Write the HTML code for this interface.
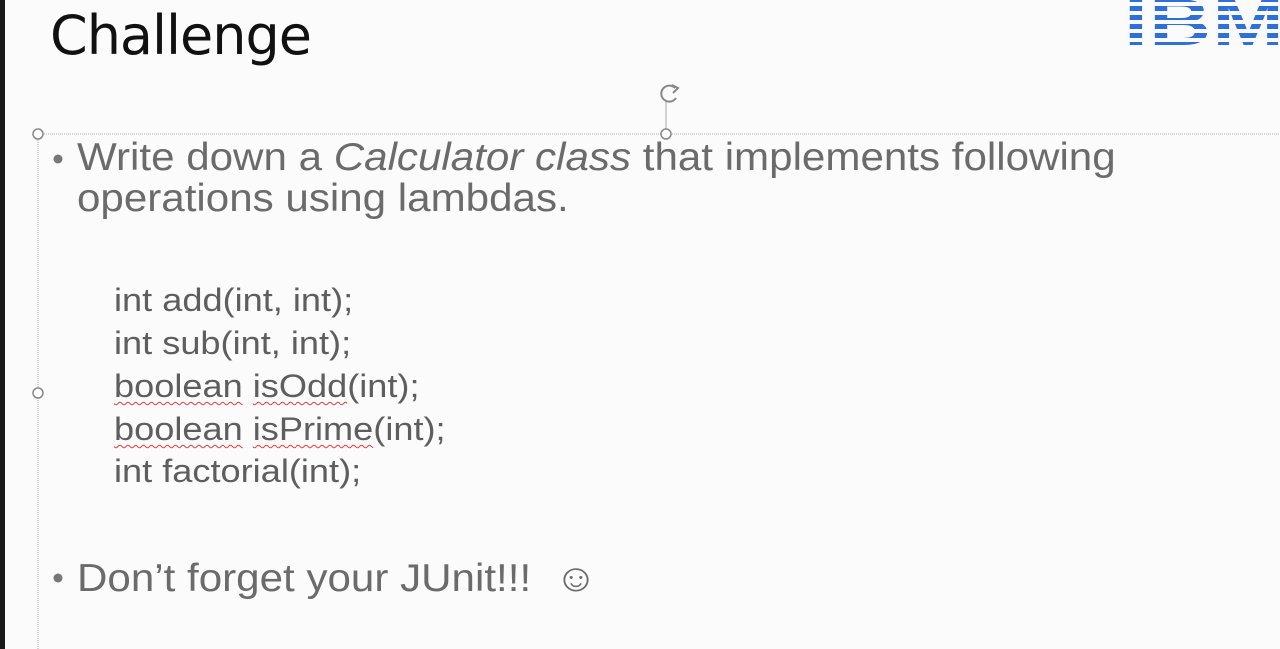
<!DOCTYPE html>
<html><head><style>
body{margin:0;width:1280px;height:649px;overflow:hidden;background:#fbfbfb;position:relative;font-family:"Liberation Sans",sans-serif;}
.strip{position:absolute;left:0;top:0;width:5px;height:649px;background:#1a1a1a;}
.t{position:absolute;white-space:nowrap;color:#6b6b6b;transform-origin:0 0;}
.title{left:50px;top:4px;font-size:54px;color:#111;font-family:"DejaVu Sans","Liberation Sans",sans-serif;letter-spacing:-1px;}
.b{font-size:39px;transform:scaleX(1.08);}
.c{font-size:32px;left:114px;color:#5e5e5e;transform:scaleX(1.13);}
.u{text-decoration:underline wavy #e04040;text-decoration-thickness:1px;text-underline-offset:4px;}
.ibm{position:absolute;left:1124px;top:-16px;font-size:66px;font-weight:bold;letter-spacing:1px;transform:scaleX(1.3);transform-origin:0 0;
background:repeating-linear-gradient(to bottom,#2f6fd8 0 5px,transparent 5px 9px);background-position:0 4px;
-webkit-background-clip:text;background-clip:text;color:transparent;font-family:"Liberation Sans",sans-serif;}
</style></head><body>
<div class="strip"></div>
<div class="ibm">IBM</div>
<div class="t title">Challenge</div>
<svg style="position:absolute;left:0;top:0" width="1280" height="649">
<line x1="38" y1="134" x2="1280" y2="134" stroke="#aaa" stroke-width="1" stroke-dasharray="1,1"/>
<line x1="38" y1="134" x2="38" y2="649" stroke="#aaa" stroke-width="1" stroke-dasharray="1,1"/>
<line x1="666" y1="100" x2="666" y2="134" stroke="#aaa"/>
<circle cx="38" cy="134" r="5" fill="#fff" stroke="#888" stroke-width="1.5"/>
<circle cx="666" cy="134" r="5" fill="#fff" stroke="#888" stroke-width="1.5"/>
<circle cx="38" cy="393" r="5" fill="#fff" stroke="#888" stroke-width="1.5"/>
<path d="M675 88 A8 8 0 1 0 676 98" fill="none" stroke="#888" stroke-width="2"/>
<path d="M672 85 L678 88 L673 93" fill="none" stroke="#888" stroke-width="2"/>
<circle cx="58" cy="159" r="4.5" fill="#777"/>
<circle cx="58" cy="578" r="4.5" fill="#777"/>
</svg>
<div class="t b" style="left:77px;top:136px;">Write down a <i>Calculator class</i> that implements following</div>
<div class="t b" style="left:77px;top:177px;">operations using lambdas.</div>
<div class="t c" style="top:282px;">int add(int, int);</div>
<div class="t c" style="top:325px;">int sub(int, int);</div>
<div class="t c" style="top:368px;"><span class="u">boolean</span> <span class="u">isOdd</span>(int);</div>
<div class="t c" style="top:411px;"><span class="u">boolean</span> <span class="u">isPrime</span>(int);</div>
<div class="t c" style="top:453px;">int factorial(int);</div>
<div class="t b" style="left:77px;top:557px;">Don’t forget your JUnit!!! &nbsp;☺</div>
</body></html>
